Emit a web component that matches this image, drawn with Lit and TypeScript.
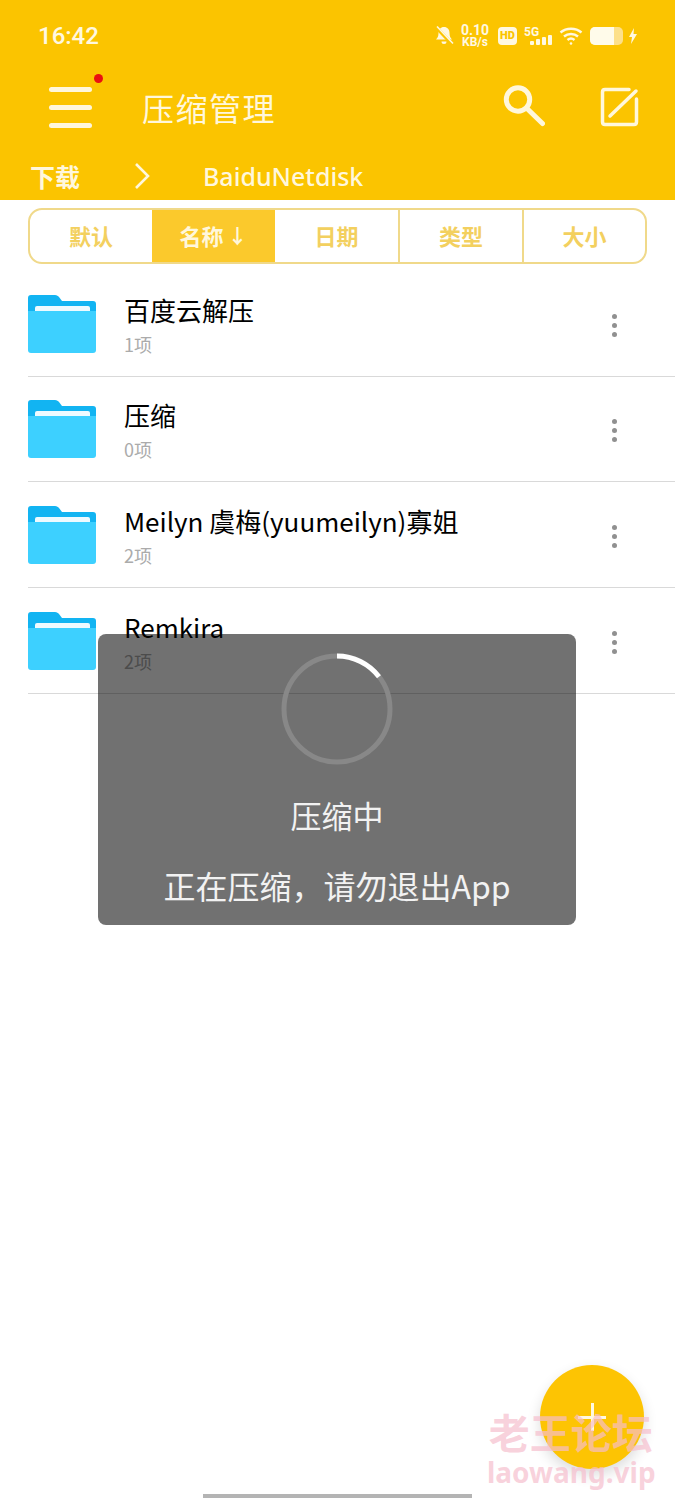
import { LitElement, css, html, svg } from 'lit';
import { customElement } from 'lit/decorators.js';

const TABS = [
  { label: '默认' },
  { label: '名称', sorted: true },
  { label: '日期' },
  { label: '类型' },
  { label: '大小' },
];

const FILES = [
  { name: '百度云解压', meta: '1项' },
  { name: '压缩', meta: '0项' },
  { name: 'Meilyn 虞梅(yuumeilyn)寡姐', meta: '2项' },
  { name: 'Remkira', meta: '2项' },
];

const folderIcon = svg`
  <svg class="folder" viewBox="0 0 68 58" width="68" height="58">
    <path d="M3 0h24c2 0 3 1 4 2l3 4h31c2 0 3 1 3 3v20H0V3c0-2 1-3 3-3z" fill="#12b4f2" />
    <rect x="7" y="11" width="55" height="7" rx="2" fill="#eefaff" />
    <path d="M0 16h68v39c0 2-1 3-3 3H3c-2 0-3-1-3-3z" fill="#3dd0ff" />
  </svg>`;

@customElement('app-root')
export class AppRoot extends LitElement {
  renderStatusIcons() {
    return html`
      <div class="status-icons">
        <svg viewBox="0 0 20 20" width="20" height="20">
          <path d="M10 1c-3.400 0-5.500 2.500-5.500 6 0 3.500-1 5-2.500 6.500h16c-1.500-1.500-2.500-3-2.500-6.500 0-3.500-2.100-6-5.500-6zM7.500 15.500h5a2.500 2.500 0 0 1-5 0z" fill="#fff8e0" />
          <path d="M2 1l16 17" stroke="#fbc400" stroke-width="3.500" />
          <path d="M3 0.500l16 17" stroke="#fff8e0" stroke-width="1.600" />
        </svg>
        <div class="speed"><span>0.10</span><span class="unit">KB/s</span></div>
        <div class="hd">HD</div>
        <div class="signal">
          <span class="five-g">5G</span>
          <div class="bars">
            <i style="height:4px"></i><i style="height:6px"></i><i style="height:8px"></i><i style="height:10px"></i>
          </div>
        </div>
        <svg class="wifi" viewBox="0 0 24 20" width="24" height="20" fill="none" stroke="#fff8e0" stroke-width="2.400">
          <path d="M1.500 6.500c6-5 15-5 21 0" />
          <path d="M5 10.500c4-3.400 10-3.400 14 0" />
          <path d="M8.500 14c2-1.600 5-1.600 7 0" />
          <circle cx="12" cy="17.500" r="1.300" fill="#fff8e0" stroke="none" />
        </svg>
        <div class="battery"><div class="charge"></div></div>
        <svg class="bolt" viewBox="0 0 8 16" width="8" height="16">
          <path d="M5 0L0 9h3l-1 7 6-10H4.500z" fill="#fff8e0" />
        </svg>
      </div>
    `;
  }

  render() {
    return html`
      <div class="page">
        <header class="top">
          <div class="status">
            <span class="time">16:42</span>
            ${this.renderStatusIcons()}
          </div>
          <div class="toolbar">
            <div class="menu">
              <i></i><i></i><i></i>
              <span class="dot"></span>
            </div>
            <div class="title">压缩管理</div>
            <svg class="search" viewBox="0 0 44 44" width="44" height="44" fill="none" stroke="#fff7dc" stroke-width="5" stroke-linecap="round">
              <circle cx="17" cy="14.500" r="11.700" />
              <path d="M25.500 23l16 15.500" />
            </svg>
            <svg class="edit" viewBox="0 0 40 40" width="40" height="40" fill="none" stroke="#fff7dc" stroke-width="3.500" stroke-linecap="round" stroke-linejoin="round">
              <path d="M30 2.500H6C4.500 2.500 3.500 3.500 3.500 5v30c0 1.500 1 2.500 2.500 2.500h29c1.500 0 2.500-1 2.500-2.500V12" />
              <path d="M11 29L37 4" />
            </svg>
          </div>
          <div class="crumbs">
            <span class="crumb-root">下载</span>
            <svg class="chevron" viewBox="0 0 16 26" width="16" height="26" fill="none" stroke="#fff7dc" stroke-width="2.600">
              <path d="M2 1l12 12L2 25" />
            </svg>
            <span class="crumb-dir">BaiduNetdisk</span>
          </div>
        </header>

        <div class="tabs">
          ${TABS.map(
            (t) => html`
              <div class="tab ${t.sorted ? 'on' : ''}">
                ${t.label}${t.sorted ? html`<span class="arrow">↓</span>` : ''}
              </div>
            `
          )}
        </div>

        <div class="list">
          ${FILES.map(
            (f) => html`
              <div class="row">
                ${folderIcon}
                <div class="info">
                  <div class="name">${f.name}</div>
                  <div class="meta">${f.meta}</div>
                </div>
                <div class="more"><i></i><i></i><i></i></div>
              </div>
            `
          )}
        </div>

        <div class="dialog">
          <svg class="spinner" viewBox="0 0 112 112" width="112" height="112" fill="none" stroke-width="5">
            <circle cx="56" cy="56" r="53" stroke="#888" />
            <path d="M56 3A53 53 0 0 1 98 23.700" stroke="#fff" />
          </svg>
          <div class="dialog-title">压缩中</div>
          <div class="dialog-text">正在压缩，请勿退出App</div>
        </div>

        <div class="fab"><span class="plus"></span></div>

        <div class="mark">
          <div class="mark-cn">老王论坛</div>
          <div class="mark-en">laowang.vip</div>
        </div>

        <div class="home"></div>
      </div>
    `;
  }

  static styles = css`
    :host {
      display: block;
      font-family: 'Noto Sans CJK SC', 'Noto Sans', sans-serif;
    }

    .page {
      position: relative;
      height: 1500px;
      overflow: hidden;
      background: #fff;
    }

    .top {
      height: 200px;
      background: #fbc400;
      color: #fff7dc;
      display: flex;
      flex-direction: column;
    }

    .status {
      height: 72px;
      display: flex;
      align-items: center;
      justify-content: space-between;
      padding: 0 38px;
    }

    .time {
      font-family: Roboto, sans-serif;
      font-size: 24px;
      font-weight: 500;
      color: #fff8e0;
    }

    .status-icons {
      display: flex;
      align-items: center;
      color: #fff8e0;
    }

    .speed {
      width: 28px;
      margin-left: 7px;
      display: flex;
      flex-direction: column;
      align-items: center;
      font-family: Roboto, sans-serif;
      font-weight: 700;
      font-size: 14px;
      line-height: 13px;
    }

    .speed .unit {
      font-size: 12px;
      line-height: 11px;
    }

    .hd {
      width: 19px;
      height: 18px;
      margin-left: 9px;
      border-radius: 4px;
      background: #fff8e0;
      color: #fbc400;
      font-family: Roboto, sans-serif;
      font-weight: 900;
      font-size: 11px;
      line-height: 18px;
      text-align: center;
    }

    .signal {
      margin-left: 7px;
      width: 28px;
      height: 18px;
      position: relative;
    }

    .five-g {
      font-family: Roboto, sans-serif;
      font-weight: 700;
      font-size: 12px;
      line-height: 10px;
      display: block;
    }

    .bars {
      position: absolute;
      right: 0;
      bottom: 0;
      display: flex;
      align-items: flex-end;
      gap: 2px;
    }

    .bars i {
      width: 4px;
      background: #fff8e0;
      border-radius: 1px;
    }

    .wifi {
      margin-left: 7px;
    }

    .battery {
      width: 33px;
      height: 18px;
      margin-left: 7px;
      border-radius: 5px;
      background: #fde08a;
      overflow: hidden;
    }

    .charge {
      width: 24px;
      height: 18px;
      background: #fffbea;
    }

    .bolt {
      margin-left: 6px;
    }

    .toolbar {
      height: 70px;
      display: flex;
      align-items: center;
      padding-left: 49px;
    }

    .menu {
      position: relative;
      width: 43px;
      height: 41px;
      display: flex;
      flex-direction: column;
      justify-content: space-between;
    }

    .menu i {
      height: 5px;
      border-radius: 3px;
      background: #fff7dc;
    }

    .dot {
      position: absolute;
      top: -13px;
      right: -11px;
      width: 9px;
      height: 9px;
      border-radius: 50%;
      background: #ea1010;
    }

    .title {
      margin-left: 50px;
      font-size: 32px;
      letter-spacing: 1.500px;
      line-height: 42px;
      flex: 1;
    }

    .search {
      margin-right: 54px;
    }

    .edit {
      margin-right: 36px;
    }

    .crumbs {
      flex: 1;
      display: flex;
      align-items: center;
      padding: 10px 0 0 30px;
    }

    .crumb-root {
      font-size: 25px;
      font-weight: 700;
      line-height: 36px;
    }

    .chevron {
      margin-left: 54px;
    }

    .crumb-dir {
      margin-left: 53px;
      font-family: 'Noto Sans', sans-serif;
      font-size: 25px;
      font-weight: 500;
      line-height: 36px;
    }

    .tabs {
      margin: 8px 28px 0;
      height: 56px;
      box-sizing: border-box;
      border: 2px solid #f0d98a;
      border-radius: 14px;
      overflow: hidden;
      display: grid;
      grid-template-columns: 122px 123px 123px 124px 1fr;
    }

    .tab {
      display: flex;
      align-items: center;
      justify-content: center;
      padding-bottom: 2px;
      font-size: 22px;
      font-weight: 700;
      color: #f3d05f;
      border-left: 2px solid #f0d98a;
    }

    .tab:first-child {
      border-left: none;
    }

    .tab.on {
      background: #fbc92c;
      color: #fff7dc;
      border-left: none;
    }

    .tab.on + .tab {
      border-left: none;
    }

    .arrow {
      margin-left: 4px;
      font-size: 20px;
    }

    .list {
      margin-top: 7px;
      padding-left: 28px;
    }

    .row {
      height: 105.670px;
      box-sizing: border-box;
      padding-top: 4px;
      border-bottom: 1px solid #d9d9d9;
      display: flex;
      align-items: center;
    }

    .folder {
      flex: none;
      margin-top: -3px;
    }

    .info {
      flex: 1;
      margin: -3px 0 0 28px;
    }

    .name {
      font-size: 26px;
      line-height: 36px;
      color: #000;
    }

    .meta {
      margin-top: 4px;
      font-size: 18px;
      line-height: 24px;
      color: #ababab;
    }

    .more {
      width: 5px;
      margin-right: 58px;
      display: flex;
      flex-direction: column;
      gap: 4px;
    }

    .more i {
      width: 5px;
      height: 5px;
      border-radius: 50%;
      background: #909090;
    }

    .dialog {
      position: absolute;
      left: 98px;
      top: 634px;
      width: 478px;
      height: 291px;
      box-sizing: border-box;
      padding-top: 19px;
      border-radius: 8px;
      background: rgba(0, 0, 0, 0.555);
      color: #f2f2f2;
      display: flex;
      flex-direction: column;
      align-items: center;
    }

    .dialog-title {
      margin-top: 28px;
      font-size: 31px;
      line-height: 44px;
    }

    .dialog-text {
      margin-top: 26px;
      font-size: 32px;
      line-height: 44px;
    }

    .fab {
      position: absolute;
      left: 540px;
      top: 1365px;
      width: 104px;
      height: 104px;
      border-radius: 50%;
      background: #fdc403;
      box-shadow: 0 6px 14px rgba(0, 0, 0, 0.14);
    }

    .plus {
      position: absolute;
      left: 38px;
      top: 38px;
      width: 28px;
      height: 28px;
      background:
        linear-gradient(#fff8e0, #fff8e0) center / 3px 28px no-repeat,
        linear-gradient(#fff8e0, #fff8e0) center / 28px 3px no-repeat;
    }

    .mark {
      position: absolute;
      left: 486px;
      top: 1408px;
      color: rgba(246, 190, 205, 0.7);
      font-weight: 700;
      text-align: center;
    }

    .mark-cn {
      font-size: 41px;
      line-height: 46px;
    }

    .mark-en {
      margin: 2px 0 0 1px;
      font-family: 'Noto Sans', sans-serif;
      font-size: 28px;
      line-height: 32px;
    }

    .home {
      position: absolute;
      left: 203px;
      top: 1494px;
      width: 269px;
      height: 4px;
      background: #b4b4b4;
    }
  `;
}

declare global {
  interface HTMLElementTagNameMap {
    'app-root': AppRoot;
  }
}
